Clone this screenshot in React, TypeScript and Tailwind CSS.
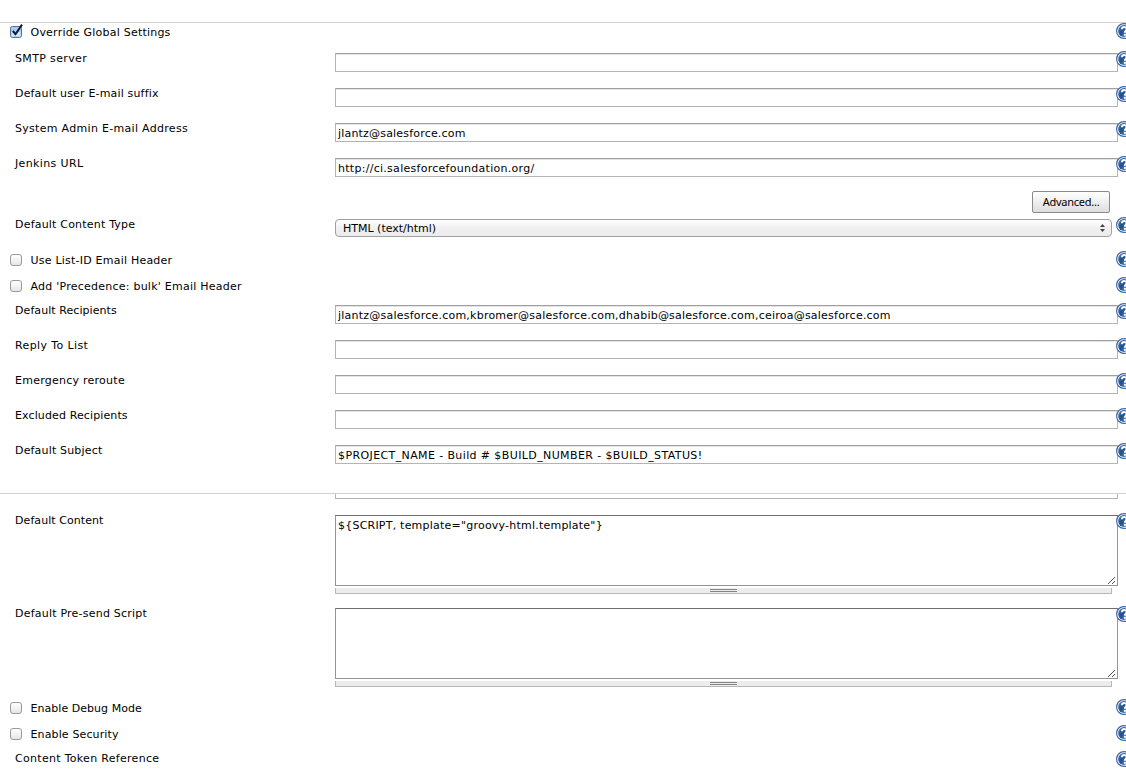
import { useId, type ReactNode } from "react";

function HelpIcon() {
  const id = useId();
  return (
    <svg className="relative h-4 w-4 shrink-0" width="16" height="16" viewBox="0 0 16 16" aria-label="Help">
      <defs>
        <linearGradient id={id} x1="0" y1="0" x2="1" y2="0.6">
          <stop offset="0" stopColor="#6489bd" />
          <stop offset="0.45" stopColor="#1f4f91" />
          <stop offset="1" stopColor="#5f86bb" />
        </linearGradient>
      </defs>
      <circle cx="8" cy="8" r="7.4" fill="#fff" stroke="#3d68a6" strokeWidth="1.2" />
      <circle cx="8" cy="8" r="5.9" fill={`url(#${id})`} />
      <path d="M6 6.2C6 3.4 10.6 3.4 10.6 6.1C10.6 7.8 8.9 7.8 8.9 9.8" fill="none" stroke="#fff" strokeWidth="2" />
      <rect x="7.9" y="10.8" width="2" height="2" fill="#fff" />
    </svg>
  );
}

function Row({ label, tracking = "", height = "h-[35px]", children }: {
  label: string;
  tracking?: string;
  height?: string;
  children?: ReactNode;
}) {
  return (
    <div className={`flex shrink-0 items-start ${height}`}>
      <div className={`w-[335px] shrink-0 whitespace-pre pl-[15px] leading-4 ${tracking}`}>{label}</div>
      <div className="-mr-0.5 w-[783px] shrink-0 pt-0.5">{children}</div>
      <HelpIcon />
    </div>
  );
}

function TextInput({ value = "", tracking = "" }: { value?: string; tracking?: string }) {
  return (
    <div className={`h-[19px] whitespace-pre border border-[#b4b4b4] border-t-[#a0a0a0] bg-white pl-0.5 leading-5 shadow-[inset_0_1px_0_#e4e4e4] ${tracking}`}>
      {value}
    </div>
  );
}

function TextArea({ value = "", tracking = "" }: { value?: string; tracking?: string }) {
  return (
    <>
      <div className="flex h-[71px] items-end justify-between border border-[#959595] border-t-[#6e6e6e] bg-white pl-0.5">
        <span className={`self-start whitespace-pre leading-5 ${tracking}`}>{value}</span>
        <svg className="mb-px mr-px" width="8" height="8" viewBox="0 0 8 8" shapeRendering="crispEdges">
          <path d="M0 7h1v1H0zM1 6h1v1H1zM2 5h1v1H2zM3 4h1v1H3zM4 3h1v1H4zM5 2h1v1H5zM6 1h1v1H6zM4 7h1v1H4zM5 6h1v1H5zM6 5h1v1H6z" fill="#555" />
        </svg>
      </div>
      <div className="mt-0.5 flex h-1.5 w-[777px] flex-col items-center gap-px border-b border-x border-[#b9b9b4] bg-[#ececec] pt-px">
        <div className="h-px w-[27px] bg-[#858585]" />
        <div className="h-px w-[27px] bg-[#858585]" />
      </div>
    </>
  );
}

function CheckRow({ label, checked = false, tracking = "", height = "h-[26px]" }: {
  label: string;
  checked?: boolean;
  tracking?: string;
  height?: string;
}) {
  return (
    <div className={`flex shrink-0 items-start ${height}`}>
      <div className="flex w-[1116px] shrink-0 items-start pl-2.5">
        {checked ? (
          <svg className="mt-px shrink-0" width="14" height="15" viewBox="0 0 14 15">
            <rect x="0.5" y="2.5" width="11" height="11" rx="2" fill="#a9cdf2" stroke="#5b6d9c" />
            <rect x="1.5" y="8" width="9" height="4.5" fill="#c9e7fc" />
            <path d="M2.8 7L5.5 10.2L12 0.6" fill="none" stroke="#0b1730" strokeWidth="2" />
          </svg>
        ) : (
          <span className="mr-0.5 mt-[3px] h-3 w-3 shrink-0 rounded-[3px] border border-[#999] bg-linear-to-b from-white to-[#e6e6e6]" />
        )}
        <span className={`ml-[6.5px] mt-0.5 whitespace-pre leading-4 ${tracking}`}>{label}</span>
      </div>
      <HelpIcon />
    </div>
  );
}

export default function App() {
  return (
    <div className="flex h-[779px] w-[1126px] flex-col overflow-hidden bg-white pt-[22px] font-['DejaVu_Sans',sans-serif] text-[11px] text-black">
      <div className="h-px shrink-0 bg-[#d2d2d2]" />
      <CheckRow label="Override Global Settings" checked height="h-7" tracking="tracking-[0.22px]" />
      <Row label="SMTP server" tracking="tracking-[0.36px]"><TextInput /></Row>
      <Row label="Default user E-mail suffix" tracking="tracking-[0.17px]"><TextInput /></Row>
      <Row label="System Admin E-mail Address" tracking="tracking-[0.3px]"><TextInput value="jlantz@salesforce.com" tracking="tracking-[0.19px]" /></Row>
      <Row label="Jenkins URL" tracking="tracking-[0.36px]"><TextInput value="http://ci.salesforcefoundation.org/" tracking="tracking-[0.28px]" /></Row>
      <div className="flex h-[26px] shrink-0 justify-end pr-4">
        <button className="h-[22px] w-[78px] whitespace-nowrap rounded-[2px] border border-[#8a8a8a] bg-linear-to-b from-white to-[#dedede] text-center font-['Noto_Sans',sans-serif] text-[11px] leading-5 tracking-[-0.25px]">Advanced...</button>
      </div>
      <Row label="Default Content Type" height="h-[34px]" tracking="tracking-[0.2px]">
        <div className="flex h-[18px] w-[777px] items-center justify-between rounded-[4px] border border-[#a0a0a0] bg-linear-to-b from-white via-[#f0f0f0] to-[#ececec] pl-[7px] pr-1.5">
          <span className="whitespace-pre pt-0.5 leading-4">HTML (text/html)</span>
          <svg width="5" height="8" viewBox="0 0 5 8"><path d="M2.5 0L5 3H0zM0 5H5L2.5 8z" fill="#444" /></svg>
        </div>
      </Row>
      <CheckRow label="Use List-ID Email Header" tracking="tracking-[0.22px]" />
      <CheckRow label="Add 'Precedence: bulk' Email Header" tracking="tracking-[0.24px]" />
      <Row label="Default Recipients" tracking="tracking-[0.07px]"><TextInput value="jlantz@salesforce.com,kbromer@salesforce.com,dhabib@salesforce.com,ceiroa@salesforce.com" tracking="tracking-[0.225px]" /></Row>
      <Row label="Reply To List" tracking="tracking-[0.38px]"><TextInput /></Row>
      <Row label="Emergency reroute" tracking="tracking-[0.25px]"><TextInput /></Row>
      <Row label="Excluded Recipients" tracking="tracking-[0.12px]"><TextInput /></Row>
      <Row label="Default Subject" height="h-[50px]" tracking="tracking-[0.17px]"><TextInput value="$PROJECT_NAME - Build # $BUILD_NUMBER - $BUILD_STATUS!" tracking="tracking-[0.39px]" /></Row>
      <div className="h-5 shrink-0 border-t border-[#d2d2d2] pl-[335px]">
        <div className="h-[5px] w-[783px] border-x border-b border-[#b4b4b4]" />
      </div>
      <Row label="Default Content" height="h-[93px]" tracking="tracking-[0.07px]"><TextArea value={'${SCRIPT, template="groovy-html.template"}'} tracking="tracking-[0.22px]" /></Row>
      <Row label="Default Pre-send Script" height="h-[93px]" tracking="tracking-[0.22px]"><TextArea /></Row>
      <CheckRow label="Enable Debug Mode" tracking="tracking-[0.04px]" />
      <CheckRow label="Enable Security" tracking="tracking-[0.13px]" />
      <div className="flex shrink-0 items-start">
        <div className="w-[1116px] shrink-0 whitespace-pre pl-[15px] leading-4 tracking-[0.3px]">Content Token Reference</div>
        <HelpIcon />
      </div>
    </div>
  );
}
